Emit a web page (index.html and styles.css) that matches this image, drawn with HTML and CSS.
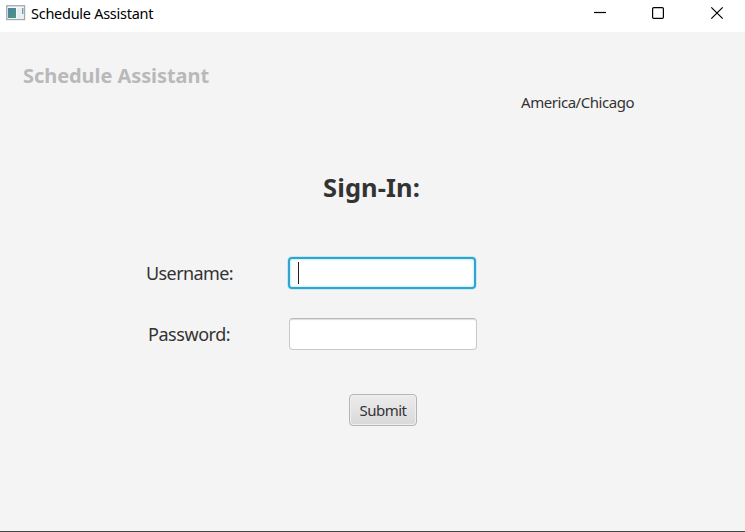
FILE: index.html
```html
<!DOCTYPE html>
<html lang="en">
<head>
<meta charset="utf-8">
<title>Schedule Assistant</title>
<link rel="stylesheet" href="styles.css">
</head>
<body>
<div class="window">
  <header class="titlebar">
    <svg class="app-icon" width="20" height="16" viewBox="0 0 20 16">
      <defs><linearGradient id="pane" x1="0" y1="0" x2="1" y2="1"><stop offset="0" stop-color="#4d7fa6"/><stop offset="1" stop-color="#4c9a79"/></linearGradient></defs>
      <rect x=".75" y=".75" width="17.8" height="13.8" fill="#f7f9fa" stroke="#a3a8b0" stroke-width="1.3"/>
      <rect x="2" y="3" width="8" height="10" fill="url(#pane)"/>
      <rect x="11" y="3" width="6" height="10" fill="#e9eff0"/>
      <rect x="16" y="3" width="1.4" height="6" fill="#6da595"/>
    </svg>
    <span class="caption">Schedule Assistant</span>
    <svg class="controls" width="132" height="14" viewBox="0 0 132 14" fill="none" stroke="#000" stroke-width="1.2">
      <path d="M0 6.5H12"/>
      <rect x="58.6" y="1.6" width="10.8" height="10.8" rx="1.2"/>
      <path d="M117.3 1.3l11.4 11.4M128.7 1.3l-11.4 11.4"/>
    </svg>
  </header>
  <main class="content">
    <h1 class="brand">Schedule Assistant</h1>
    <p class="zone">America/Chicago</p>
    <h2 class="heading">Sign-In:</h2>
    <form class="form">
      <div class="row user"><label class="label">Username:</label><div class="field focused"><i class="caret"></i></div></div>
      <div class="row pass"><label class="label">Password:</label><div class="field"></div></div>
      <button class="submit" type="button"><span>Submit</span></button>
    </form>
  </main>
</div>
</body>
</html>
```
FILE: styles.css
```css
* { box-sizing: border-box; }
body {
  margin: 0;
  font-family: "Noto Sans", "Open Sans", sans-serif;
  color: #333;
}
.window {
  width: 745px;
  height: 532px;
  display: flex;
  flex-direction: column;
  background: #f4f4f4;
  border-bottom: 1px solid #444;
  overflow: hidden;
}
.titlebar {
  display: flex;
  align-items: flex-start;
  height: 32px;
  flex: none;
  background: #fff;
  padding: 0 19px 0 6px;
}
.app-icon { margin-top: 5px; }
.caption {
  margin: 3px 0 0 5px;
  font-size: 14.5px;
  line-height: 20px;
  letter-spacing: -0.27px;
  color: #000;
  white-space: nowrap;
}
.controls { margin: 6px 0 0 auto; }
.content { flex: 1; }
.brand {
  margin: 29px 0 0 23px;
  font-size: 20px;
  line-height: 30px;
  font-weight: 700;
  letter-spacing: -0.07px;
  color: #b9b9b9;
}
.zone {
  margin: 1px 0 0 521px;
  font-size: 15px;
  line-height: 20px;
  letter-spacing: -0.45px;
}
.heading {
  margin: 55px 0 0 323px;
  font-size: 25.5px;
  line-height: 40px;
  font-weight: 700;
  letter-spacing: 0.1px;
}
.row { display: flex; align-items: flex-end; height: 33px; }
.user { margin: 49px 0 0 146px; }
.pass { margin: 28px 0 0 148px; }
.label { font-size: 18px; line-height: 32px; letter-spacing: -0.6px; }
.user .label { width: 142px; }
.pass .label { width: 141px; letter-spacing: -0.45px; }
.field {
  width: 188px;
  height: 32px;
  background: #fff;
  border: 1px solid #c8c8c8;
  border-top-color: #b9b9b9;
  border-radius: 4px;
  box-shadow: inset 0 2px 1px -1px #ddd;
}
.focused {
  padding: 3px 0 0 8px;
  border: 2px solid #2fa5cd;
  box-shadow: 0 0 0 1px #c5eaf7, inset 0 0 2px 1px #c9effb;
}
.caret { display: block; width: 1px; height: 22px; background: #222; }
.submit {
  display: block;
  margin: 44px 0 0 349px;
  padding: 0;
  width: 68px;
  height: 32px;
  font: inherit;
  font-size: 15px;
  line-height: 30px;
  letter-spacing: -0.5px;
  color: #333;
  border: 1px solid #b5b5b5;
  border-radius: 4px;
  background: linear-gradient(#ececec, #d9d9d9);
  box-shadow: inset 0 0 0 1px #efefef;
}
```
